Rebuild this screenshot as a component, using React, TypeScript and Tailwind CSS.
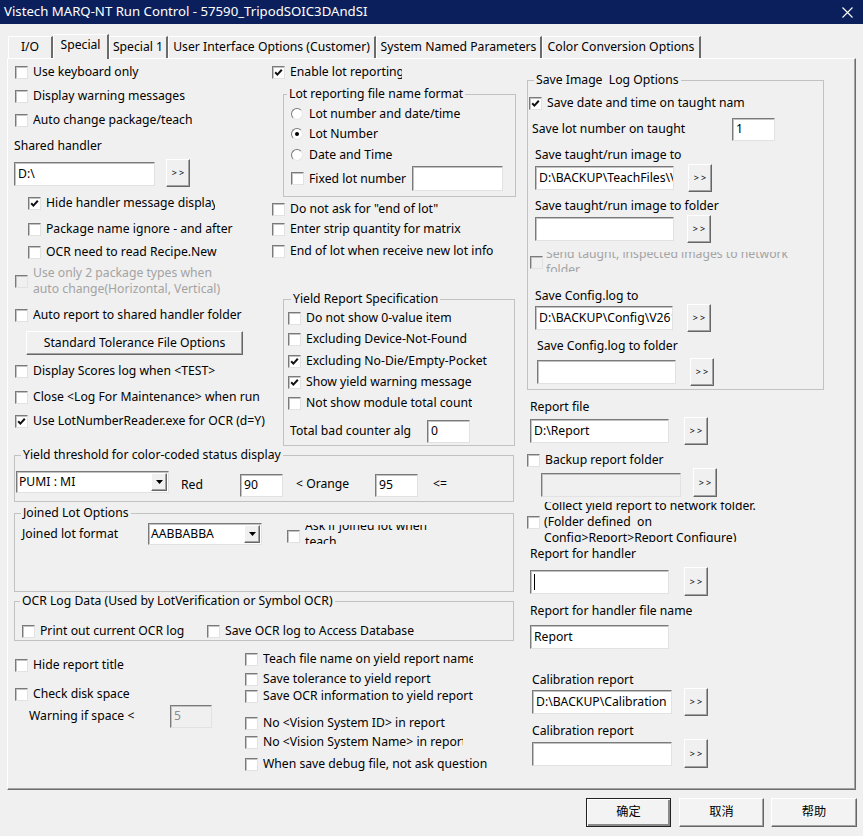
import React from 'react';

const sunken =
  'border border-t-[#7a7a7a] border-l-[#7a7a7a] border-r-[#e2e2e2] border-b-[#e2e2e2] shadow-[inset_1px_1px_0_#c2c2c2]';
const raised =
  'border border-t-white border-l-white border-r-[#666666] border-b-[#666666] shadow-[inset_-1px_-1px_0_#a3a3a3]';

type Kids = { children?: React.ReactNode };

function Box({ checked = false, disabled = false }: { checked?: boolean; disabled?: boolean }) {
  return (
    <span className={`relative block w-[13px] h-[13px] shrink-0 ${sunken} ${disabled ? 'bg-[#f0f0f0]' : 'bg-white'}`}>
      {checked && (
        <svg viewBox="0 0 11 11" className="absolute left-0 top-0 w-[11px] h-[11px]">
          <path d="M2.2 5.2 L4.4 7.6 L8.8 2.8" fill="none" stroke="#111" strokeWidth="2" />
        </svg>
      )}
    </span>
  );
}

function Check({
  label,
  checked = false,
  disabled = false,
  className = '',
  labelClass = '',
}: {
  label: string;
  checked?: boolean;
  disabled?: boolean;
  className?: string;
  labelClass?: string;
}) {
  return (
    <div className={`flex items-center h-[16px] ${className}`}>
      <Box checked={checked} disabled={disabled} />
      <span
        className={`ml-[5px] whitespace-nowrap overflow-hidden leading-[16px] ${disabled ? 'text-[#a3a3a3]' : ''} ${labelClass}`}
      >
        {label}
      </span>
    </div>
  );
}

function Radio({ label, checked = false, className = '' }: { label: string; checked?: boolean; className?: string }) {
  return (
    <div className={`flex items-center h-[16px] ${className}`}>
      <span className="relative block w-[12px] h-[12px] shrink-0 rounded-full bg-white border border-t-[#7a7a7a] border-l-[#7a7a7a] border-r-[#e6e6e6] border-b-[#e6e6e6]">
        {checked && <span className="absolute left-[3px] top-[3px] w-[4px] h-[4px] rounded-full bg-black" />}
      </span>
      <span className="ml-[6px] whitespace-nowrap leading-[16px]">{label}</span>
    </div>
  );
}

function Field({
  value = '',
  className = '',
  disabled = false,
  caret = false,
}: {
  value?: string;
  className?: string;
  disabled?: boolean;
  caret?: boolean;
}) {
  return (
    <div
      className={`shrink-0 ${sunken} ${disabled ? 'bg-[#f0f0f0] text-[#8c8c8c]' : 'bg-white'} flex items-center pl-[3px] overflow-hidden whitespace-nowrap ${className}`}
    >
      {caret && <span className="block w-[1px] h-[16px] bg-black" />}
      {value}
    </div>
  );
}

function Browse({ className = '' }: { className?: string }) {
  return (
    <div
      className={`w-[24px] shrink-0 flex items-center justify-center bg-[#f0f0f0] ${raised} text-[9px] tracking-[2px] pl-[2px] ${className}`}
    >
      &gt;&gt;
    </div>
  );
}

function Combo({ value, className = '' }: { value: string; className?: string }) {
  return (
    <div className={`h-[22px] flex shrink-0 bg-white ${sunken} ${className}`}>
      <span className="flex-1 pl-[2px] leading-[19px] whitespace-nowrap overflow-hidden">{value}</span>
      <span className={`w-[16px] h-[18px] mt-[1px] mr-[1px] flex items-center justify-center bg-[#f0f0f0] ${raised}`}>
        <svg viewBox="0 0 7 4" className="w-[7px] h-[4px]">
          <path d="M0 0H7L3.5 4Z" fill="#000" />
        </svg>
      </span>
    </div>
  );
}

function Group({
  title,
  className = '',
  legendClass = '',
  children,
}: Kids & { title: string; className?: string; legendClass?: string }) {
  return (
    <fieldset className={`border border-[#c2c2c2] ${className}`}>
      <legend className={`px-[2px] leading-[16px] whitespace-pre ${legendClass}`}>{title}</legend>
      {children}
    </fieldset>
  );
}

function Label({ children, className = '' }: Kids & { className?: string }) {
  return <div className={`h-[16px] leading-[16px] whitespace-nowrap ${className}`}>{children}</div>;
}

function Tab({ label, className = '', active = false }: { label: string; className?: string; active?: boolean }) {
  return (
    <div
      className={`flex items-center justify-center whitespace-nowrap border-t border-l border-t-white border-l-white border-r-2 border-r-[#6b6b6b] ${
        active ? 'h-[25px] mb-[-1px] relative z-10 bg-[#f0f0f0] pb-[3px]' : 'h-[22px]'
      } ${className}`}
    >
      {label}
    </div>
  );
}

function DlgBtn({ children, className = '', primary = false }: Kids & { className?: string; primary?: boolean }) {
  return (
    <div
      className={`h-[29px] flex items-center justify-center bg-[#f3f3f3] ${
        primary
          ? 'border border-[#222222] shadow-[inset_1px_1px_0_#ffffff,inset_-2px_-2px_0_#8a8a8a]'
          : raised
      } ${className}`}
    >
      {children}
    </div>
  );
}

export default function App() {
  return (
    <div className="w-[863px] h-[836px] bg-[#f0f0f0] text-black text-[12.2px] font-['Noto_Sans','Noto_Sans_CJK_SC',sans-serif] flex flex-col overflow-hidden">
      {/* Title bar */}
      <div className="h-[24px] shrink-0 bg-[#0b1f5c] flex items-center text-white text-[13.2px] pl-[4px]">
        <span>Vistech MARQ-NT Run Control - 57590_TripodSOIC3DAndSI</span>
        <svg className="ml-auto mr-[10px]" width="11" height="11" viewBox="0 0 11 11">
          <path d="M0.5 0.5L10.5 10.5M10.5 0.5L0.5 10.5" stroke="#ffffff" strokeWidth="1.1" />
        </svg>
      </div>

      {/* Tabs */}
      <div className="flex items-end h-[24px] mt-[10px] ml-[8px] shrink-0">
        <Tab label="I/O" className="w-[45px] border-r-0" />
        <Tab label="Special" active className="w-[56px]" />
        <Tab label="Special 1" className="w-[59px]" />
        <Tab label="User Interface Options (Customer)" className="w-[208px]" />
        <Tab label="System Named Parameters" className="w-[166px]" />
        <Tab label="Color Conversion Options" className="w-[159px]" />
      </div>

      {/* Tab panel */}
      <div className="ml-[7px] w-[849px] h-[732px] shrink-0 border border-t-white border-l-white border-r-[#6e6e6e] border-b-[#6e6e6e] shadow-[inset_-1px_-1px_0_#a3a3a3] pt-[5px] pl-[6px] flex">
        {/* Left area */}
        <div className="w-[502px] flex flex-col">
          <div className="flex h-[382px]">
            {/* Left column */}
            <div className="w-[258px] flex flex-col">
              <Check className="ml-[1px]" label="Use keyboard only" />
              <Check className="ml-[1px] mt-[8px]" label="Display warning messages" />
              <Check className="ml-[1px] mt-[8px]" label="Auto change package/teach" />
              <Label className="mt-[10px]">Shared handler</Label>
              <div className="mt-[5px] flex items-start h-[28px]">
                <Field value={'D:\\'} className="mt-[3px] w-[141px] h-[24px]" />
                <Browse className="ml-[11px] h-[28px]" />
              </div>
              <Check className="ml-[14px] mt-[8px]" checked label="Hide handler message display" labelClass="w-[169px]" />
              <Check className="ml-[14px] mt-[10px]" label="Package name ignore - and after" />
              <Check className="ml-[14px] mt-[7px]" label="OCR need to read Recipe.New" />
              <div className="mt-[5px] ml-[1px] flex items-center h-[32px]">
                <Box disabled />
                <div className="ml-[5px] leading-[16px] text-[#a3a3a3]">
                  Use only 2 package types when
                  <br />
                  auto change(Horizontal, Vertical)
                </div>
              </div>
              <Check className="ml-[1px] mt-[10px]" label="Auto report to shared handler folder" />
              <div className={`mt-[8px] ml-[12px] w-[217px] h-[24px] flex items-center justify-center bg-[#f0f0f0] ${raised}`}>
                Standard Tolerance File Options
              </div>
              <Check className="ml-[1px] mt-[8px]" label="Display Scores log when <TEST>" />
              <Check className="ml-[1px] mt-[10px]" label="Close <Log For Maintenance> when run" />
              <Check className="ml-[1px] mt-[8px]" checked label="Use LotNumberReader.exe for OCR (d=Y)" />
            </div>

            {/* Middle column */}
            <div className="w-[244px] flex flex-col">
              <Check checked label="Enable lot reporting" labelClass="w-[112px]" />
              <Group title="Lot reporting file name format" className="mt-[6px] ml-[11px] w-[233px] pb-[5px]" legendClass="ml-[3px]">
                <Radio className="ml-[7px] mt-[4px]" label="Lot number and date/time" />
                <Radio className="ml-[7px] mt-[4px]" checked label="Lot Number" />
                <Radio className="ml-[7px] mt-[5px]" label="Date and Time" />
                <div className="ml-[7px] mt-[3px] h-[25px] flex items-center">
                  <Check label="Fixed lot number" labelClass="w-[103px]" />
                  <Field className="w-[91px] h-[25px]" />
                </div>
              </Group>
              <Check className="mt-[4px]" label={'Do not ask for "end of lot"'} />
              <Check className="mt-[4px]" label="Enter strip quantity for matrix" />
              <Check className="mt-[6px]" label="End of lot when receive new lot info" />
              <Group title="Yield Report Specification" className="mt-[32px] ml-[11px] w-[232px] pb-[2px]" legendClass="ml-[7px]">
                <Check className="ml-[4px] mt-[3px]" label="Do not show 0-value item" />
                <Check className="ml-[4px] mt-[5px]" label="Excluding Device-Not-Found" />
                <Check className="ml-[4px] mt-[6px]" checked label="Excluding No-Die/Empty-Pocket" />
                <Check className="ml-[4px] mt-[5px]" checked label="Show yield warning message" />
                <Check className="ml-[4px] mt-[5px]" label="Not show module total count" />
                <div className="ml-[6px] mt-[9px] h-[23px] flex items-center">
                  <span className="w-[137px] whitespace-nowrap">Total bad counter alg</span>
                  <Field value="0" className="w-[43px] h-[23px]" />
                </div>
              </Group>
            </div>
          </div>

          <Group title="Yield threshold for color-coded status display" className="mt-[1px] w-[500px] pb-[4px]" legendClass="ml-[6px]">
            <div className="mt-[8px] h-[26px] flex items-start">
              <Combo value="PUMI : MI" className="ml-[1px] w-[153px]" />
              <span className="ml-[12px] mt-[6px] w-[59px] leading-[16px]">Red</span>
              <Field value="90" className="mt-[3px] w-[43px] h-[23px]" />
              <span className="ml-[13px] mt-[5px] w-[79px] leading-[16px] whitespace-nowrap">&lt; Orange</span>
              <Field value="95" className="mt-[3px] w-[43px] h-[23px]" />
              <span className="ml-[15px] mt-[5px] leading-[16px]">&lt;=</span>
            </div>
          </Group>

          <Group title="Joined Lot Options" className="mt-[3px] w-[500px] pb-[45px]" legendClass="ml-[6px]">
            <div className="mt-[2px] h-[23px] flex items-start">
              <span className="ml-[7px] mt-[3px] w-[126px] leading-[16px] whitespace-nowrap">Joined lot format</span>
              <Combo value="AABBABBA" className="w-[114px]" />
              <div className="ml-[25px] flex items-start h-[23px]">
                <span className="mt-[7px]">
                  <Box />
                </span>
                <div className="ml-[5px] mt-[2px] h-[19px] overflow-hidden">
                  <div className="mt-[-7px] leading-[16px] whitespace-nowrap">
                    Ask if joined lot when
                    <br />
                    teach
                  </div>
                </div>
              </div>
            </div>
          </Group>

          <Group title="OCR Log Data (Used by LotVerification or Symbol OCR)" className="mt-[1px] w-[500px] pb-[1px]" legendClass="ml-[5px]">
            <div className="mt-[14px] flex">
              <Check className="ml-[7px] w-[185px]" label="Print out current OCR log" />
              <Check label="Save OCR log to Access Database" />
            </div>
          </Group>

          <div className="flex">
            <div className="w-[231px] flex flex-col">
              <Check className="ml-[1px] mt-[16px]" label="Hide report title" />
              <Check className="ml-[1px] mt-[13px]" label="Check disk space" />
              <div className="mt-[3px] h-[23px] flex items-center">
                <span className="ml-[15px] w-[141px] whitespace-nowrap">Warning if space &lt;</span>
                <Field value="5" disabled className="w-[42px] h-[23px]" />
              </div>
            </div>
            <div className="flex flex-col">
              <Check className="mt-[10px]" label="Teach file name on yield report name" labelClass="w-[210px]" />
              <Check className="mt-[4px]" label="Save tolerance to yield report" />
              <Check className="mt-[1px]" label="Save OCR information to yield report" />
              <Check className="mt-[11px]" label="No <Vision System ID> in report" labelClass="w-[186px]" />
              <Check className="mt-[3px]" label="No <Vision System Name> in report" labelClass="w-[200px]" />
              <Check className="mt-[6px]" label="When save debug file, not ask question" />
            </div>
          </div>
        </div>

        {/* Right column */}
        <div className="ml-[11px] w-[297px] mt-[8px] flex flex-col">
          <Group title="Save Image  Log Options" className="w-[297px] pb-[3px]" legendClass="ml-[6px]">
            <Check className="ml-[1px] mt-[7px]" checked label="Save date and time on taught name" labelClass="w-[198px]" />
            <div className="mt-[7px] h-[23px] flex items-center">
              <span className="ml-[4px] w-[200px] whitespace-nowrap">Save lot number on taught</span>
              <Field value="1" className="w-[43px] h-[23px]" />
            </div>
            <Label className="mt-[6px] ml-[7px]">Save taught/run image to</Label>
            <div className="mt-[1px] h-[28px] flex items-center">
              <Field value={'D:\\BACKUP\\TeachFiles\\V2611'} className="ml-[7px] w-[139px] h-[24px]" />
              <Browse className="ml-[14px] h-[28px]" />
            </div>
            <Label className="mt-[6px] ml-[7px]">Save taught/run image to folder</Label>
            <div className="mt-[1px] h-[28px] flex items-center">
              <Field className="ml-[7px] w-[139px] h-[24px]" />
              <Browse className="ml-[13px] h-[28px]" />
            </div>
            <div className="mt-[9px] ml-[2px] h-[20px] flex items-start">
              <span className="mt-[4px]">
                <Box disabled />
              </span>
              <div className="ml-[3px] h-[20px] overflow-hidden">
                <div className="mt-[-6px] leading-[16px] whitespace-nowrap text-[#a3a3a3]">
                  Send taught, inspected images to network
                  <br />
                  folder
                </div>
              </div>
            </div>
            <Label className="mt-[16px] ml-[7px]">Save Config.log to</Label>
            <div className="h-[28px] flex items-center">
              <Field value={'D:\\BACKUP\\Config\\V2611'} className="ml-[7px] w-[138px] h-[24px]" />
              <Browse className="ml-[14px] h-[28px]" />
            </div>
            <Label className="mt-[6px] ml-[9px]">Save Config.log to folder</Label>
            <div className="mt-[4px] h-[28px] flex items-center">
              <Field className="ml-[9px] w-[139px] h-[24px]" />
              <Browse className="ml-[14px] h-[28px]" />
            </div>
          </Group>

          <Label className="mt-[9px] ml-[3px]">Report file</Label>
          <div className="mt-[2px] h-[28px] flex items-center">
            <Field value={'D:\\Report'} className="ml-[3px] w-[139px] h-[24px]" />
            <Browse className="ml-[15px] h-[28px]" />
          </div>
          <Check className="mt-[7px]" label="Backup report folder" />
          <div className="h-[29px] flex items-end">
            <Field disabled className="ml-[14px] w-[140px] h-[24px]" />
            <Browse className="ml-[12px] h-[29px]" />
          </div>
          <div className="mt-[5px] h-[40px] flex items-start">
            <span className="mt-[14px]">
              <Box />
            </span>
            <div className="ml-[4px] h-[40px] overflow-hidden">
              <div className="mt-[-4px] leading-[16px] whitespace-nowrap">
                Collect yield report to network folder.
                <br />
                (Folder defined&nbsp; on
                <br />
                Config&gt;Report&gt;Report Configure)
              </div>
            </div>
          </div>
          <Label className="mt-[4px] ml-[3px]">Report for handler</Label>
          <div className="mt-[5px] h-[29px] flex items-center">
            <Field caret className="ml-[3px] w-[139px] h-[24px]" />
            <Browse className="ml-[15px] h-[29px]" />
          </div>
          <Label className="mt-[7px] ml-[3px]">Report for handler file name</Label>
          <Field value="Report" className="mt-[6px] ml-[3px] w-[139px] h-[24px]" />
          <Label className="mt-[23px] ml-[5px]">Calibration report</Label>
          <div className="h-[28px] flex items-center">
            <Field value={'D:\\BACKUP\\Calibration'} className="ml-[5px] w-[140px] h-[24px]" />
            <Browse className="ml-[12px] h-[28px]" />
          </div>
          <Label className="mt-[7px] ml-[5px]">Calibration report</Label>
          <div className="h-[29px] flex items-center">
            <Field className="ml-[5px] w-[140px] h-[24px]" />
            <Browse className="ml-[12px] h-[29px]" />
          </div>
        </div>
      </div>

      {/* Dialog buttons */}
      <div className="mt-[8px] flex justify-end pr-[6px] shrink-0">
        <DlgBtn primary className="w-[85px]">确定</DlgBtn>
        <DlgBtn className="ml-[8px] w-[85px]">取消</DlgBtn>
        <DlgBtn className="ml-[7px] w-[86px]">帮助</DlgBtn>
      </div>
    </div>
  );
}
